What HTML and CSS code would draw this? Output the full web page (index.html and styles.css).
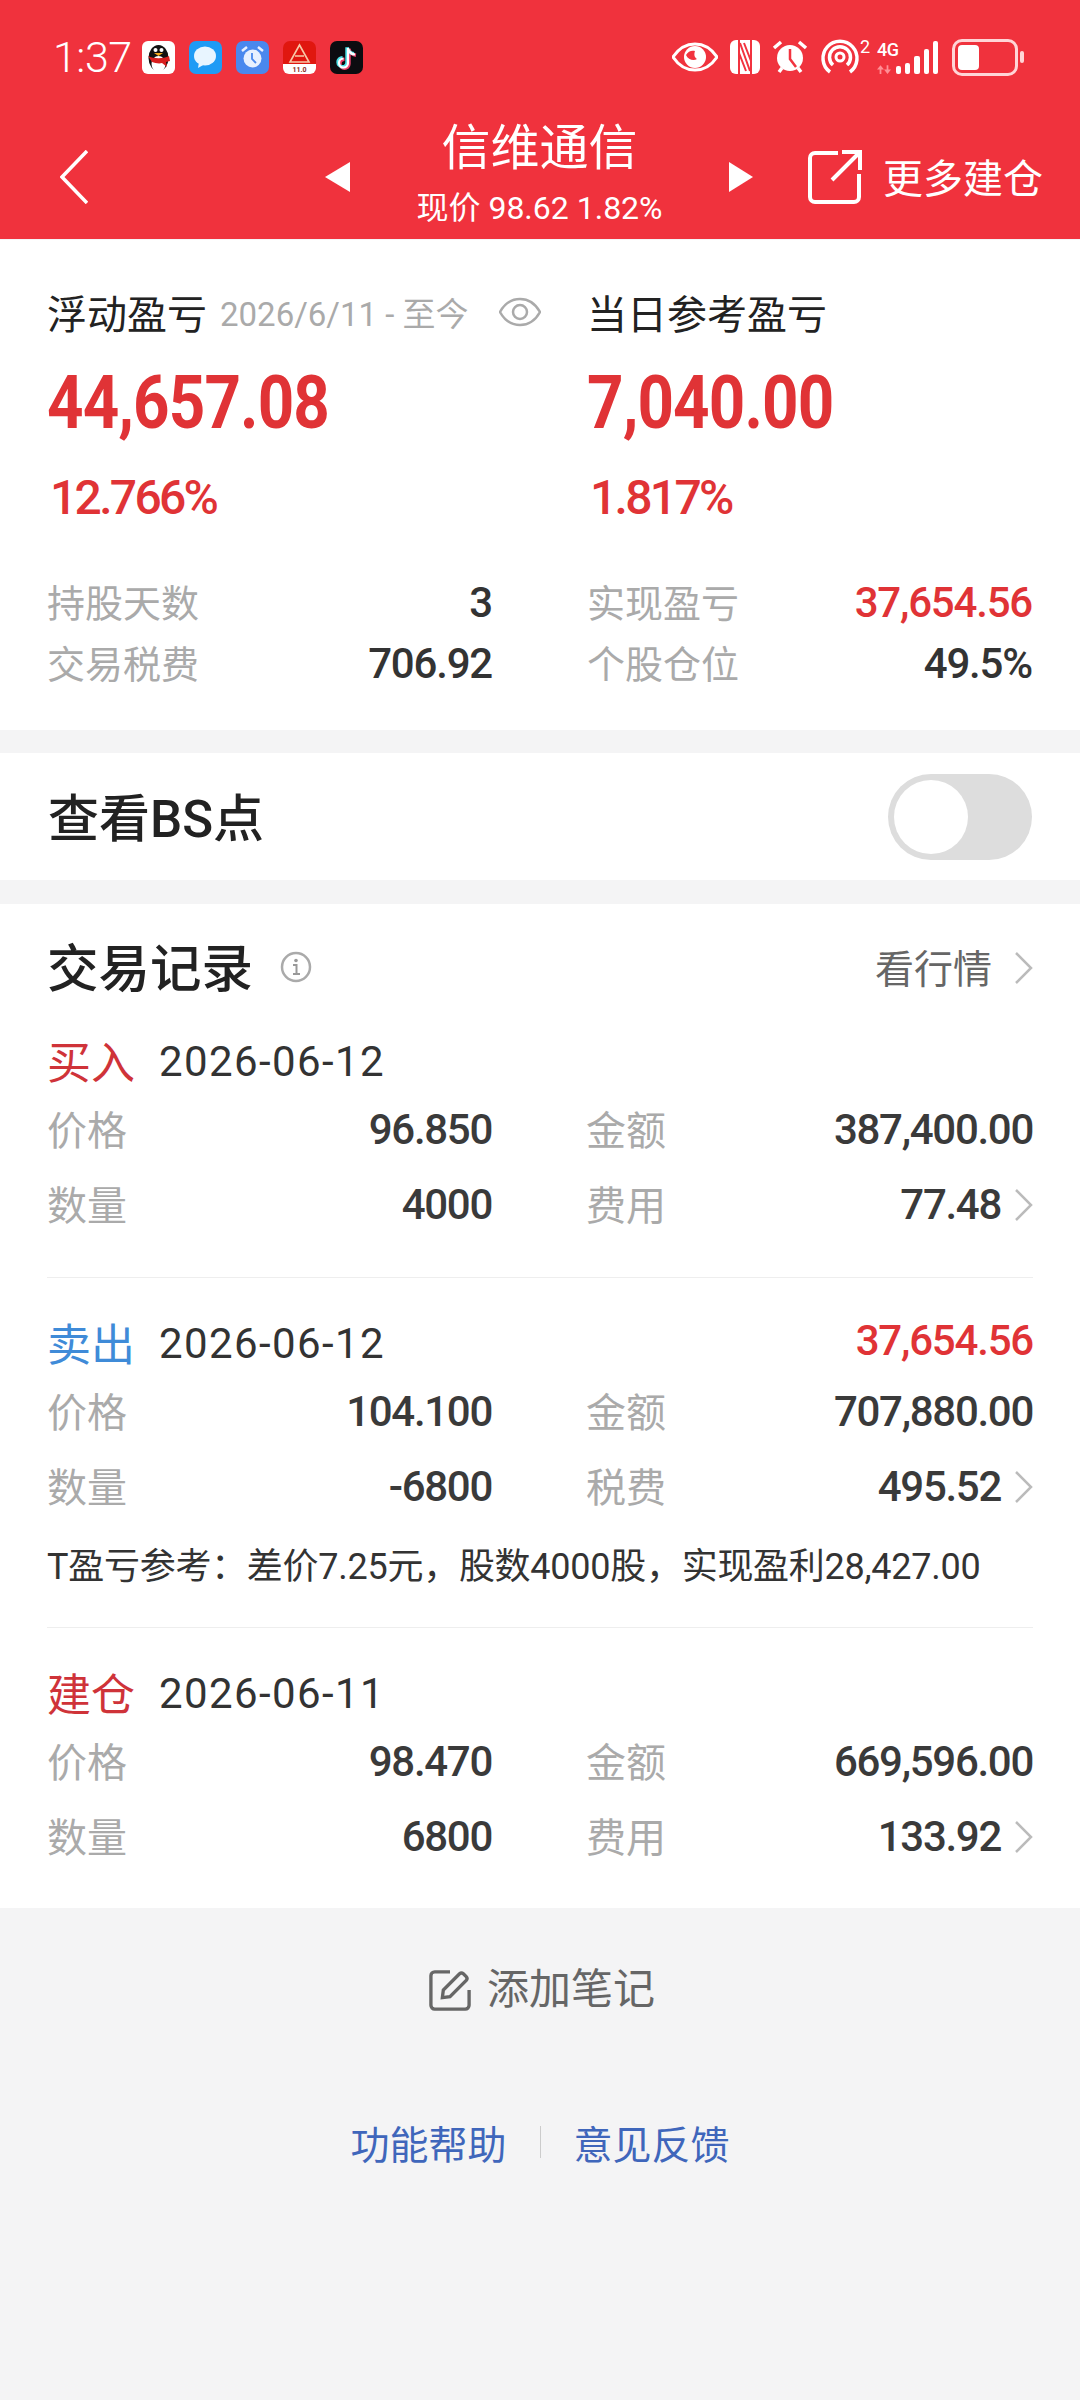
FILE: index.html
```html
<!DOCTYPE html>
<html lang="zh-CN">
<head>
    <meta charset="UTF-8">
    <meta name="viewport" content="width=device-width, initial-scale=1.0">
    <title>信维通信</title>
    <link rel="stylesheet" href="styles.css">
</head>
<body>
    <header class="header">
        <div class="statusbar">
            <span class="time">1:37</span>
            <div class="app-icons">
                <svg class="app-icon" viewBox="0 0 33 33"><rect width="33" height="33" rx="6" fill="#fff"/><ellipse cx="16.5" cy="17" rx="10" ry="13" fill="#111"/><ellipse cx="16.5" cy="23" rx="7" ry="8" fill="#fff"/><path d="M6 15c6 3 15 3 21 0l1 5-4 1 1 5-5-4c-3 1-7 0-10-1z" fill="#d81e1e"/><circle cx="13.5" cy="9" r="2" fill="#fff"/><circle cx="19.5" cy="9" r="2" fill="#fff"/><path d="M12 12h9l-4.500 3z" fill="#f2a71b"/></svg>
                <svg class="app-icon" viewBox="0 0 33 33"><rect width="33" height="33" rx="7" fill="#1e9bf5"/><ellipse cx="16" cy="15" rx="11" ry="9.500" fill="#e8f5ff"/><path d="M10 21l-1 6 7-4z" fill="#e8f5ff"/></svg>
                <svg class="app-icon" viewBox="0 0 33 33"><rect width="33" height="33" rx="7" fill="#4a88ee"/><circle cx="16.500" cy="17.500" r="9" fill="#e8f0ff"/><path d="M16 12v6l4 4" fill="none" stroke="#4a88ee" stroke-width="1.800"/><path d="M6 10l5-4M27 10l-5-4" stroke="#e8f0ff" stroke-width="2.500"/></svg>
                <svg class="app-icon" viewBox="0 0 33 33"><rect width="33" height="33" rx="7" fill="#e0170f"/><path d="M0 23h33v4a6 6 0 0 1-6 6H6a6 6 0 0 1-6-6z" fill="#fff"/><path d="M16.500 4L7 21h19zM12 15h9" fill="none" stroke="#f8c9a8" stroke-width="1.600"/><text class="app-version" x="16.500" y="31" text-anchor="middle">11.0</text></svg>
                <svg class="app-icon" viewBox="0 0 33 33"><rect width="33" height="33" rx="7" fill="#0c0c10"/><path d="M18 7v15a4.500 4.500 0 1 1-4.500-4.500M18 7c.5 3.500 3 6 7 6.500" fill="none" stroke="#f0416c" stroke-width="3.400" transform="translate(1 .8)"/><path d="M18 7v15a4.500 4.500 0 1 1-4.500-4.500M18 7c.5 3.500 3 6 7 6.500" fill="none" stroke="#4de3e8" stroke-width="3.400" transform="translate(-1 -.8)"/><path d="M18 7v15a4.500 4.500 0 1 1-4.500-4.500M18 7c.5 3.500 3 6 7 6.500" fill="none" stroke="#fff" stroke-width="2.200"/></svg>
            </div>
            <div class="sys-icons">
                <svg class="sys-eye" viewBox="0 0 46 30"><path d="M1 15C7 6 14 2 23 2s16 4 22 13c-6 9-13 13-22 13S7 24 1 15z" fill="none" stroke="#fff" stroke-width="3"/><circle cx="23" cy="15" r="11" fill="#fff"/><path d="M14 13c2-4 6-5 9-4-1 3-1 6 2 8-3 2-9 1-11-4z" fill="#f2333f"/></svg>
                <svg class="sys-nfc" viewBox="0 0 30 34"><rect width="30" height="34" rx="6" fill="#fff"/><path d="M9 0v34M21 0v34" stroke="#f2333f" stroke-width="2"/><path d="M10 3l10 28M14 3l7 18M9 13l7 18" stroke="#f2333f" stroke-width="2"/></svg>
                <svg class="sys-alarm" viewBox="0 0 36 36"><circle cx="18" cy="19" r="13" fill="#fff"/><path d="M18 10v10l6 8" fill="none" stroke="#f2333f" stroke-width="2.500"/><path d="M2 9l7-6M34 9l-7-6M7 33l3-4M29 33l-3-4" stroke="#fff" stroke-width="3.500"/></svg>
                <svg class="sys-hotspot" viewBox="0 0 40 36"><path d="M10 33a17 17 0 1 1 20 0" fill="none" stroke="#fff" stroke-width="3.500"/><path d="M13 26a10.500 10.500 0 1 1 14 0" fill="none" stroke="#fff" stroke-width="3.500"/><circle cx="20" cy="18" r="4" fill="none" stroke="#fff" stroke-width="3"/></svg>
                <span class="sys-sup">2</span>
                <div class="signal">
                    <span class="net-type">4G</span>
                    <svg class="net-arrows" viewBox="0 0 16 10"><path d="M4 0L0 5h3v5h2V5h3zM12 10l4-5h-3V0h-2v5H8z" fill="#ff8f95"/></svg>
                </div>
                <div class="bars">
                    <span class="bar bar1"></span><span class="bar bar2"></span><span class="bar bar3"></span><span class="bar bar4"></span><span class="bar bar5"></span>
                </div>
                <div class="battery"><span class="battery-level"></span></div>
                <span class="battery-tip"></span>
            </div>
        </div>
        <nav class="nav">
            <svg class="nav-back" viewBox="0 0 28 54"><path d="M27 1L2 27l25 26" fill="none" stroke="#fff" stroke-width="3.500"/></svg>
            <span class="tri tri-left"></span>
            <div class="nav-title">
                <div class="stock-name">信维通信</div>
                <div class="stock-price">现价 98.62 1.82%</div>
            </div>
            <span class="tri tri-right"></span>
            <svg class="nav-export" viewBox="0 0 54 54"><path d="M30 3H7a5 5 0 0 0-5 5v39a5 5 0 0 0 5 5h39a5 5 0 0 0 5-5V24" fill="none" stroke="#fff" stroke-width="4"/><path d="M24 30L52 2M34 2h18v18" fill="none" stroke="#fff" stroke-width="4"/></svg>
            <span class="nav-more">更多建仓</span>
        </nav>
    </header>

    <section class="card summary">
        <div class="summary-col">
            <div class="sum-label">浮动盈亏<span class="sum-date">2026/6/11 - 至今</span>
                <svg class="sum-eye" viewBox="0 0 42 30"><path d="M1 15C6 6 13 2 21 2s15 4 20 13c-5 9-12 13-20 13S6 24 1 15z" fill="none" stroke="#aaa" stroke-width="2.500"/><circle cx="21" cy="15" r="7" fill="none" stroke="#aaa" stroke-width="2.500"/></svg>
            </div>
            <div class="sum-value">44,657.08</div>
            <div class="sum-pct">12.766%</div>
            <div class="stat stat-first"><span class="stat-label">持股天数</span><span class="stat-value">3</span></div>
            <div class="stat"><span class="stat-label">交易税费</span><span class="stat-value">706.92</span></div>
        </div>
        <div class="summary-col">
            <div class="sum-label">当日参考盈亏</div>
            <div class="sum-value">7,040.00</div>
            <div class="sum-pct">1.817%</div>
            <div class="stat stat-first"><span class="stat-label">实现盈亏</span><span class="stat-value red">37,654.56</span></div>
            <div class="stat"><span class="stat-label">个股仓位</span><span class="stat-value">49.5%</span></div>
        </div>
    </section>

    <section class="card bs-row">
        <span class="bs-label">查看BS点</span>
        <div class="toggle"><span class="toggle-knob"></span></div>
    </section>

    <section class="card records">
        <div class="records-head">
            <span class="records-title">交易记录</span>
            <svg class="info-icon" viewBox="0 0 32 32"><circle cx="16" cy="16" r="14" fill="none" stroke="#aaa" stroke-width="2.500"/><circle cx="16" cy="9.500" r="1.800" fill="#999"/><path d="M13 14h3.500v9M13 23h7" fill="none" stroke="#999" stroke-width="2"/></svg>
            <span class="records-link">看行情</span>
            <svg class="chevron chevron-head" viewBox="0 0 19 32"><path d="M2 1l15 15L2 31" fill="none" stroke="#bbb" stroke-width="2.500"/></svg>
        </div>

        <div class="trade trade-first">
            <div class="trade-head"><span class="trade-type red-dark">买入</span><span class="trade-date">2026-06-12</span></div>
            <div class="trade-grid">
                <div class="cell"><span class="cell-label">价格</span><span class="cell-value">96.850</span></div>
                <div class="cell"><span class="cell-label">金额</span><span class="cell-value">387,400.00</span></div>
                <div class="cell"><span class="cell-label">数量</span><span class="cell-value">4000</span></div>
                <div class="cell"><span class="cell-label">费用</span><span class="cell-value">77.48</span>
                    <svg class="chevron" viewBox="0 0 19 32"><path d="M2 1l15 15L2 31" fill="none" stroke="#bbb" stroke-width="2.500"/></svg></div>
            </div>
        </div>

        <div class="trade">
            <div class="trade-head"><span class="trade-type blue">卖出</span><span class="trade-date">2026-06-12</span><span class="trade-profit">37,654.56</span></div>
            <div class="trade-grid">
                <div class="cell"><span class="cell-label">价格</span><span class="cell-value">104.100</span></div>
                <div class="cell"><span class="cell-label">金额</span><span class="cell-value">707,880.00</span></div>
                <div class="cell"><span class="cell-label">数量</span><span class="cell-value">-6800</span></div>
                <div class="cell"><span class="cell-label">税费</span><span class="cell-value">495.52</span>
                    <svg class="chevron" viewBox="0 0 19 32"><path d="M2 1l15 15L2 31" fill="none" stroke="#bbb" stroke-width="2.500"/></svg></div>
            </div>
            <p class="trade-note">T盈亏参考：差价7.25元，股数4000股，实现盈利28,427.00</p>
        </div>

        <div class="trade">
            <div class="trade-head"><span class="trade-type red-dark">建仓</span><span class="trade-date">2026-06-11</span></div>
            <div class="trade-grid">
                <div class="cell"><span class="cell-label">价格</span><span class="cell-value">98.470</span></div>
                <div class="cell"><span class="cell-label">金额</span><span class="cell-value">669,596.00</span></div>
                <div class="cell"><span class="cell-label">数量</span><span class="cell-value">6800</span></div>
                <div class="cell"><span class="cell-label">费用</span><span class="cell-value">133.92</span>
                    <svg class="chevron" viewBox="0 0 19 32"><path d="M2 1l15 15L2 31" fill="none" stroke="#bbb" stroke-width="2.500"/></svg></div>
            </div>
        </div>
    </section>

    <div class="footer">
        <div class="add-note">
            <svg class="note-icon" viewBox="0 0 44 44"><path d="M22 3H6a4 4 0 0 0-4 4v31a4 4 0 0 0 4 4h32a4 4 0 0 0 4-4V22" fill="none" stroke="#666" stroke-width="3.500"/><path d="M14 30l1-8L32 5a3 3 0 0 1 4 0l3 3a3 3 0 0 1 0 4L22 29z" fill="none" stroke="#666" stroke-width="3.500"/></svg>
            <span class="add-note-text">添加笔记</span>
        </div>
        <div class="help-links">
            <a href="#">功能帮助</a>
            <span class="help-sep"></span>
            <a href="#">意见反馈</a>
        </div>
    </div>
</body>
</html>
```

FILE: styles.css
```css
* {
    margin: 0;
    padding: 0;
    box-sizing: border-box;
}

body {
    width: 1080px;
    height: 2400px;
    background: #f4f4f5;
    font-family: Roboto, "Noto Sans CJK SC", sans-serif;
    color: #333;
    overflow: hidden;
}

.red { color: #e03336; }
.red-dark { color: #cf3339; }
.blue { color: #3f8bd8; }

/* Header */
.header {
    height: 239px;
    background: #f0323d;
    color: #fff;
}

.statusbar {
    height: 114px;
    display: flex;
    align-items: center;
    padding-left: 53px;
}

.time {
    width: 89px;
    font-size: 43px;
    font-weight: 300;
    letter-spacing: -0.5px;
}

.app-icons {
    display: flex;
    gap: 14px;
}

.app-icon {
    width: 33px;
    height: 33px;
}

.app-version {
    font-size: 7px;
    font-weight: 700;
    fill: #8a2a1a;
}

.sys-icons {
    display: flex;
    align-items: center;
    margin-left: 309px;
}

.sys-eye { width: 46px; height: 30px; }
.sys-nfc { width: 30px; height: 34px; margin-left: 12px; }
.sys-alarm { width: 36px; height: 36px; margin-left: 12px; }
.sys-hotspot { width: 40px; height: 36px; margin-left: 12px; }

.sys-sup {
    width: 17px;
    font-size: 18px;
    margin-bottom: 22px;
}

.signal {
    width: 19px;
    display: flex;
    flex-direction: column;
    align-items: flex-start;
    white-space: nowrap;
}

.net-type {
    font-size: 18px;
    font-weight: 500;
    line-height: 18px;
    letter-spacing: -0.5px;
}

.net-arrows {
    width: 14px;
    height: 9px;
    margin-top: 6px;
}

.bars {
    display: flex;
    align-items: flex-end;
    gap: 4px;
    width: 42px;
    height: 33px;
    margin-top: 1px;
}

.bar {
    width: 5.200px;
    background: #fff;
    border-radius: 2px;
}

.bar1 { height: 8px; }
.bar2 { height: 11px; }
.bar3 { height: 18px; }
.bar4 { height: 25px; }
.bar5 { height: 33px; }

.battery {
    width: 66px;
    height: 37px;
    margin-left: 14px;
    border: 3px solid #ffd5d7;
    border-radius: 10px;
    padding: 3px;
}

.battery-level {
    display: block;
    width: 21px;
    height: 100%;
    background: #fff;
    border-radius: 4px;
}

.battery-tip {
    width: 4px;
    height: 12px;
    margin-left: 2px;
    background: #ffd5d7;
    border-radius: 2px;
}

.nav {
    height: 125px;
    display: flex;
    align-items: center;
    padding-left: 60px;
}

.nav-back {
    width: 28px;
    height: 54px;
    margin-right: 237px;
}

.tri {
    width: 0;
    height: 0;
    border-top: 15px solid transparent;
    border-bottom: 15px solid transparent;
}

.tri-left { border-right: 25px solid #fff; }
.tri-right { border-left: 24px solid #fff; }

.nav-title {
    width: 379px;
    align-self: flex-start;
    margin-top: 5px;
    text-align: center;
}

.stock-name {
    font-size: 49px;
    line-height: 60px;
}

.stock-price {
    font-size: 32px;
    line-height: 36px;
    margin-top: 11px;
}

.nav-export {
    width: 54px;
    height: 54px;
    margin-left: 55px;
}

.nav-more {
    margin-left: 21px;
    margin-bottom: 2px;
    font-size: 40px;
}

/* Cards */
.card {
    background: #fff;
}

.summary {
    margin-top: 1px;
    height: 490px;
    padding: 47px 48px 0 47px;
    display: grid;
    grid-template-columns: 445px 445px;
    gap: 95px;
    margin-bottom: 23px;
}

.sum-label {
    display: flex;
    align-items: center;
    height: 50px;
    font-size: 40px;
    color: #222;
    white-space: nowrap;
}

.sum-date {
    margin-left: 13px;
    font-size: 33px;
    color: #aaa;
}

.sum-eye {
    flex-shrink: 0;
    width: 42px;
    height: 30px;
    margin-left: 30px;
}

.sum-value {
    margin-top: 21px;
    font-size: 74px;
    line-height: 90px;
    font-weight: 700;
    letter-spacing: -1px;
    color: #e03336;
    transform: scaleX(0.86);
    transform-origin: left center;
}

.sum-pct {
    margin-top: 20px;
    padding-left: 3px;
    font-size: 48px;
    line-height: 60px;
    font-weight: 500;
    letter-spacing: -2.700px;
    color: #e03336;
}

.stat {
    display: flex;
    justify-content: space-between;
    align-items: center;
    height: 61px;
}

.stat-first {
    margin-top: 44px;
}

.stat-label {
    margin-bottom: 4px;
    font-size: 38px;
    color: #aaa;
}

.stat-value {
    font-size: 42px;
    font-weight: 500;
    letter-spacing: -1.200px;
}

.stat-value.red { color: #e03336; }

.bs-row {
    height: 127px;
    display: flex;
    justify-content: space-between;
    align-items: center;
    padding: 0 48px;
    margin-bottom: 24px;
}

.bs-label {
    margin-bottom: 4px;
    font-size: 51px;
    font-weight: 500;
    color: #222;
}

.toggle {
    width: 144px;
    height: 86px;
    padding: 6px;
    background: #ddd;
    border-radius: 43px;
}

.toggle-knob {
    display: block;
    width: 74px;
    height: 74px;
    background: #fff;
    border-radius: 50%;
}

/* Records */
.records {
    height: 1004px;
    padding: 0 47px;
}

.records-head {
    display: flex;
    align-items: center;
    padding-top: 28px;
    height: 94px;
}

.records-title {
    margin-bottom: 2px;
    font-size: 51.500px;
    font-weight: 500;
    color: #222;
}

.info-icon {
    width: 32px;
    height: 32px;
    margin-left: 27px;
    margin-top: 3px;
}

.records-link {
    margin-left: auto;
    margin-top: 2px;
    font-size: 39px;
    color: #666;
}

.chevron {
    width: 19px;
    height: 32px;
}

.chevron-head {
    margin-left: 22px;
    margin-top: 6px;
}

.trade {
    padding: 35px 0 35px;
    border-top: 1px solid #eee;
}

.trade-first {
    padding-top: 33px;
    border-top: none;
}

.trade-head {
    display: flex;
    align-items: center;
    height: 60px;
}

.trade-type {
    margin-bottom: 3px;
    font-size: 44px;
}

.trade-date {
    margin-left: 24px;
    font-size: 42px;
    letter-spacing: 1.400px;
}

.trade-profit {
    margin-left: auto;
    margin-bottom: 6px;
    font-size: 42px;
    font-weight: 500;
    letter-spacing: -1.200px;
    color: #e03336;
}

.trade-grid {
    display: grid;
    grid-template-columns: 445px 447px;
    column-gap: 94px;
    margin-top: 1px;
}

.cell {
    height: 75px;
    display: flex;
    align-items: center;
}

.cell-label {
    margin-bottom: 4px;
    margin-right: auto;
    font-size: 40px;
    color: #aaa;
}

.cell-value {
    font-size: 42px;
    font-weight: 500;
    letter-spacing: -1.300px;
    color: #3a3a3a;
}

.cell .chevron {
    margin-left: 13px;
}

.trade-note {
    margin-top: 21px;
    margin-bottom: 3px;
    font-size: 36px;
    line-height: 44px;
    letter-spacing: -0.270px;
    white-space: nowrap;
}

/* Footer */
.footer {
    padding-top: 52px;
}

.add-note {
    height: 60px;
    display: flex;
    justify-content: center;
    align-items: center;
    gap: 16px;
    padding-left: 4px;
    font-size: 42px;
    color: #666;
}

.add-note-text {
    margin-bottom: 10px;
}

.note-icon {
    width: 42px;
    height: 42px;
}

.help-links {
    margin-top: 92px;
    height: 60px;
    display: flex;
    justify-content: center;
    align-items: center;
    font-size: 39px;
}

.help-links a {
    color: #3f66bb;
    text-decoration: none;
}

.help-sep {
    width: 1px;
    height: 32px;
    margin: 0 33px;
    background: #ccc;
}
```
